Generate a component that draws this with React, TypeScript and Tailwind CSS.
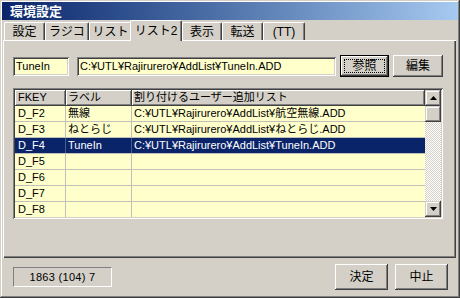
import React from 'react';

const font = "font-['Liberation_Sans','Noto_Sans_CJK_JP',sans-serif]";

const tabs = [
  { label: '設定', w: 'w-[41px]' },
  { label: 'ラジコ', w: 'w-[44px]' },
  { label: 'リスト', w: 'w-[43px]' },
  { label: 'リスト2', w: 'w-[52px]', active: true },
  { label: '表示', w: 'w-[40px]' },
  { label: '転送', w: 'w-[41px]' },
  { label: '(TT)', w: 'w-[42px]' },
];

const rows = [
  { key: 'D_F2', label: '無線', path: 'C:¥UTL¥Rajirurero¥AddList¥航空無線.ADD' },
  { key: 'D_F3', label: 'ねとらじ', path: 'C:¥UTL¥Rajirurero¥AddList¥ねとらじ.ADD' },
  { key: 'D_F4', label: 'TuneIn', path: 'C:¥UTL¥Rajirurero¥AddList¥TuneIn.ADD', selected: true },
  { key: 'D_F5', label: '', path: '' },
  { key: 'D_F6', label: '', path: '' },
  { key: 'D_F7', label: '', path: '' },
  { key: 'D_F8', label: '', path: '' },
];

const Arrow = ({ up }: { up?: boolean }) => (
  <svg width="7" height="4" viewBox="0 0 7 4">
    {up ? <polygon points="3.5,0 7,4 0,4" fill="#000" /> : <polygon points="0,0 7,0 3.5,4" fill="#000" />}
  </svg>
);

const Button = ({ children, className }: { children: React.ReactNode; className: string }) => (
  <button className={`bg-[#d4d0c8] text-[12px] text-black flex items-center justify-center shadow-[inset_-1px_-1px_#404040,inset_1px_1px_#ffffff,inset_-2px_-2px_#808080] ${className}`}>
    {children}
  </button>
);

export default function App() {
  return (
    <div className={`w-[460px] h-[298px] bg-[#d4d0c8] p-[2px] flex flex-col text-black ${font} shadow-[inset_-1px_-1px_#404040,inset_1px_1px_#d4d0c8,inset_-2px_-2px_#808080,inset_2px_2px_#ffffff]`}>
      {/* Title */}
      <div className="h-[18px] shrink-0 bg-linear-to-r from-[#0a246a] to-[#a6caf0] flex items-center pl-[8px] text-white font-bold text-[13px] leading-none">
        環境設定
      </div>

      {/* Tabs */}
      <div className="h-[20px] shrink-0 flex items-end pl-[2px]">
        {tabs.map(t =>
          t.active ? (
            <div key={t.label} className={`${t.w} -ml-[2px] h-[21px] -mb-[1px] relative z-10 bg-[#d4d0c8] rounded-t-[2px] border-t border-l border-white border-r border-r-[#404040] shadow-[inset_-1px_0_#808080] text-[12px] leading-none flex justify-center pt-[4px]`}>
              {t.label}
            </div>
          ) : (
            <div key={t.label} className={`${t.w} h-[18px] bg-[#d4d0c8] rounded-t-[2px] border-t border-l border-white border-r border-r-[#404040] shadow-[inset_-1px_0_#808080] text-[12px] leading-none flex justify-center pt-[3px]`}>
              {t.label}
            </div>
          )
        )}
      </div>

      {/* Panel */}
      <div className="ml-[1px] w-[453px] h-[218px] shrink-0 flex flex-col pt-[15px] pl-[10px] shadow-[inset_1px_1px_#ffffff,inset_-1px_-1px_#404040,inset_-2px_-2px_#808080]">
        <div className="h-[22px] flex items-center">
          <div className="w-[56px] h-[19px] bg-[#ffffcc] text-[11px] leading-[19px] pl-[3px] shadow-[inset_1px_1px_#808080,inset_-1px_-1px_#ffffff,inset_2px_2px_#404040,inset_-2px_-2px_#d4d0c8]">
            TuneIn
          </div>
          <div className="ml-[8px] w-[259px] h-[19px] bg-[#ffffcc] text-[11px] leading-[19px] pl-[3px] shadow-[inset_1px_1px_#808080,inset_-1px_-1px_#ffffff,inset_2px_2px_#404040,inset_-2px_-2px_#d4d0c8]">
            C:¥UTL¥Rajirurero¥AddList¥TuneIn.ADD
          </div>
          <Button className="ml-[4px] w-[49px] h-[22px] border border-black shadow-[inset_-1px_-1px_#404040,inset_1px_1px_#ffffff,inset_-2px_-2px_#808080] p-[3px]">
            <span className="w-full h-full border border-dotted border-black flex items-center justify-center leading-none">参照</span>
          </Button>
          <Button className="ml-[4px] w-[50px] h-[22px]">編集</Button>
        </div>

        {/* Table */}
        <div className="mt-[11px] w-[430px] h-[131px] p-[2px] flex bg-[#ffffcc] shadow-[inset_1px_1px_#808080,inset_-1px_-1px_#ffffff,inset_2px_2px_#404040,inset_-2px_-2px_#d4d0c8]">
          <div className="w-[410px] flex flex-col overflow-hidden text-[11px]">
            <div className="h-[16px] shrink-0 flex">
              <div className="w-[51px] bg-[#d4d0c8] border-r border-b border-[#404040] shadow-[inset_1px_1px_#ffffff,inset_-1px_-1px_#808080] pl-[3px] leading-[15px]">FKEY</div>
              <div className="w-[66px] bg-[#d4d0c8] border-r border-b border-[#404040] shadow-[inset_1px_1px_#ffffff,inset_-1px_-1px_#808080] pl-[2px] leading-[15px]">ラベル</div>
              <div className="w-[293px] bg-[#d4d0c8] border-r border-b border-[#404040] shadow-[inset_1px_1px_#ffffff,inset_-1px_-1px_#808080] pl-[2px] leading-[15px]">割り付けるユーザー追加リスト</div>
            </div>
            {rows.map(r => (
              <div key={r.key} className={`h-[16px] shrink-0 flex border-b border-[#c0c0b8] ${r.selected ? 'bg-[#0a246a] text-white' : 'bg-[#ffffcc]'}`}>
                <div className={`w-[51px] border-r pl-[3px] leading-[15px] ${r.selected ? 'border-[#4a5a8a]' : 'border-[#c0c0b8]'}`}>{r.key}</div>
                <div className={`w-[66px] border-r pl-[2px] leading-[15px] ${r.selected ? 'border-[#4a5a8a]' : 'border-[#c0c0b8]'}`}>{r.label}</div>
                <div className="w-[293px] pl-[2px] leading-[15px] whitespace-nowrap">{r.path}</div>
              </div>
            ))}
          </div>
          {/* Scrollbar */}
          <div className="w-[16px] flex flex-col">
            <div className="h-[16px] shrink-0 bg-[#d4d0c8] flex items-center justify-center shadow-[inset_-1px_-1px_#404040,inset_1px_1px_#d4d0c8,inset_-2px_-2px_#808080,inset_2px_2px_#ffffff]">
              <Arrow up />
            </div>
            <div className="h-[16px] shrink-0 bg-[#d4d0c8] shadow-[inset_-1px_-1px_#404040,inset_1px_1px_#d4d0c8,inset_-2px_-2px_#808080,inset_2px_2px_#ffffff]" />
            <div className="flex-1 bg-[image:repeating-conic-gradient(#d4d0c8_0%_25%,#ffffff_0%_50%)] bg-[length:2px_2px]" />
            <div className="h-[16px] shrink-0 bg-[#d4d0c8] flex items-center justify-center shadow-[inset_-1px_-1px_#404040,inset_1px_1px_#d4d0c8,inset_-2px_-2px_#808080,inset_2px_2px_#ffffff]">
              <Arrow />
            </div>
          </div>
        </div>
      </div>

      {/* Footer */}
      <div className="h-[38px] shrink-0 flex items-center pl-[11px] pr-[10px]">
        <div className="w-[99px] h-[20px] border-t border-l border-[#808080] border-r border-b border-r-white border-b-white text-[11px] flex items-center justify-center tracking-[0.3px]">
          1863 (104) 7
        </div>
        <div className="flex-1" />
        <Button className="w-[53px] h-[26px]">決定</Button>
        <Button className="ml-[7px] w-[53px] h-[26px]">中止</Button>
      </div>
    </div>
  );
}
